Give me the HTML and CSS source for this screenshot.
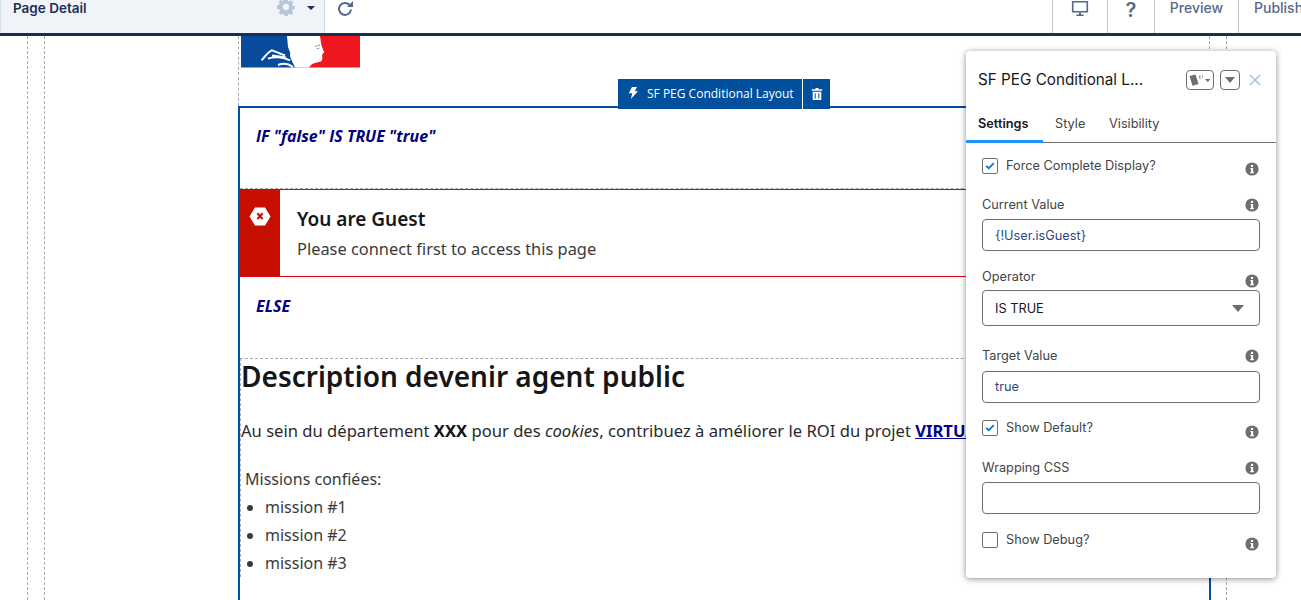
FILE: index.html
```html
<!DOCTYPE html>
<html lang="en">
<head>
    <meta charset="UTF-8">
    <title>Page Detail</title>
    <link rel="stylesheet" href="styles.css">
</head>
<body>
    <svg class="defs" width="0" height="0">
        <symbol id="i-info" viewBox="0 0 14 14">
            <circle cx="7" cy="7" r="6.6" fill="#706e6b"/>
            <circle cx="7" cy="3.9" r="1.2" fill="#fff"/>
            <path d="M5.4 6h2.7v4.1h.8v1.1H5.2v-1.1h.9V7.1h-.7z" fill="#fff"/>
        </symbol>
        <symbol id="i-check" viewBox="0 0 16 16">
            <path d="M3.6 8.4l1.3-1.2 1.9 1.8 4.4-4.4 1.2 1.2-5.6 5.8z" fill="#0176d3"/>
        </symbol>
    </svg>

    <header class="topbar">
        <div class="page-select">
            <span class="page-name">Page Detail</span>
            <svg class="gear" width="20" height="20" viewBox="0 0 20 20">
                <path fill-rule="evenodd" fill="#b4c6d8" d="M8.2 1h3.6l.4 2.4 1.4.6 2-1.4 2.5 2.5-1.4 2 .6 1.4 2.4.4v3.6l-2.4.4-.6 1.4 1.4 2-2.5 2.5-2-1.4-1.4.6-.4 2.4H8.2l-.4-2.4-1.4-.6-2 1.4-2.5-2.5 1.4-2-.6-1.4L0 11.800V8.200l2.3-.4.6-1.400-1.400-2L4 1.900l2 1.400 1.400-.6zM10 6.500a3.500 3.500 0 1 0 0 7 3.500 3.500 0 0 0 0-7z"/>
            </svg>
            <span class="caret"></span>
        </div>
        <svg class="refresh" width="18" height="18" viewBox="0 0 18 18">
            <path d="M12.600 5A6 6 0 1 0 14 9.500" fill="none" stroke="#54698d" stroke-width="2"/>
            <path d="M16 1v6h-6z" fill="#54698d"/>
        </svg>
        <nav class="top-actions">
            <div class="top-btn btn-device">
                <svg width="18" height="18" viewBox="0 0 18 18">
                    <path d="M1.500 1h15a.6.6 0 0 1 .6.600v10.300a.6.6 0 0 1-.6.600h-15a.6.6 0 0 1-.6-.6V1.600a.6.6 0 0 1 .6-.6zm1 1.600v8.300h13V2.600z" fill="#54698d"/>
                    <path d="M8 12.500h2v2h2.500v1.500h-7v-1.500H8z" fill="#54698d"/>
                </svg>
            </div>
            <div class="top-btn btn-help">?</div>
            <div class="top-btn btn-preview">Preview</div>
            <div class="top-btn btn-publish">Publish</div>
        </nav>
    </header>

    <main class="canvas">
        <div class="guide-outer">
            <div class="guide-inner">
                <div class="column">
                    <div class="logo-zone">
                        <svg class="logo" width="119" height="32" viewBox="0 0 119 32">
                            <rect x="0" y="0" width="60" height="31.500" fill="#0a4a9c"/>
                            <rect x="60" y="0" width="59" height="31.500" fill="#ef1620"/>
                            <path d="M46 0H79C80 6 80 10 83.300 16L81 19C81.500 21 81.500 24 80.500 25C77 27 71 26 68 31.500H54C52 27 50 24 49 20C50 17 48 14 47 11z" fill="#fff"/>
                            <path d="M20.700 24.300C24 20 27 16 30.700 14.300C35 16 40 18 44 19.300M27 22.700C33 20 42 21 49 24.300M37 29C42 27 48 28 52 31M31 19.500L45 21.500" fill="none" stroke="#fff" stroke-width="2"/>
                            <path d="M74 10.500l5-1.500M75.500 13l3-1" stroke="#999" stroke-width="1"/>
                        </svg>
                    </div>

                    <section class="cond-box">
                        <div class="cond-label if-label">IF "false" IS TRUE "true"</div>
                        <div class="alert">
                            <div class="alert-side">
                                <svg width="22" height="19" viewBox="0 0 22 19">
                                    <path d="M6 .5h10l5.500 9-5.500 9H6L.5 9.500z" fill="#fff"/>
                                    <path d="M7.600 7l1.400-1.400 2 2 2-2L14.400 7l-2 2.200 2 2.100-1.400 1.400-2-2-2 2-1.400-1.400 2-2.100z" fill="#c70f00"/>
                                </svg>
                            </div>
                            <div class="alert-body">
                                <div class="alert-title">You are Guest</div>
                                <div class="alert-text">Please connect first to access this page</div>
                            </div>
                        </div>
                        <div class="cond-label else-label">ELSE</div>
                        <article class="rich">
                            <h1>Description devenir agent public</h1>
                            <p class="lead">Au sein du département <strong>XXX</strong> pour des <em>cookies</em>, contribuez à améliorer le ROI du projet <a href="#">VIRTUAL</a></p>
                            <p class="missions">Missions confiées:</p>
                            <ul>
                                <li>mission #1</li>
                                <li>mission #2</li>
                                <li>mission #3</li>
                            </ul>
                        </article>
                    </section>

                    <div class="cmp-toolbar">
                        <div class="cmp-name">
                            <svg width="10" height="12" viewBox="0 0 10 12">
                                <path d="M4 0h5L6.800 4.200H10L2.800 12l1.500-5.700H.8z" fill="#fff"/>
                            </svg>
                            <span>SF PEG Conditional Layout</span>
                        </div>
                        <div class="cmp-delete">
                            <svg width="12" height="12" viewBox="0 0 12 12">
                                <path d="M4.500 0h3v1.200h3.700v1.500H.8V1.200h3.700zM1.700 3.700h8.600V12H1.700zM3.700 5.200v5.300h1V5.200zm3.600 0v5.300h1V5.200z" fill="#fff"/>
                            </svg>
                        </div>
                    </div>
                </div>
            </div>
        </div>

        <aside class="panel">
            <div class="panel-head">
                <span class="panel-title">SF PEG Conditional L...</span>
                <span class="mini-btn mini-cards">
                    <svg width="24" height="14" viewBox="0 0 24 14">
                        <path d="M1.500 3L7.500 1.500 10.500 11 4.500 12.800z" fill="#706e6b"/>
                        <path d="M11 2.500l1.500.4-.4 4.500zM14 2.500l1 .2-.8 3z" fill="#706e6b"/>
                        <path d="M17 6h5.500l-2.750 3z" fill="#706e6b"/>
                    </svg>
                </span>
                <span class="mini-btn mini-down"><span class="tri"></span></span>
                <svg class="close" width="14" height="14" viewBox="0 0 14 14">
                    <path d="M2 2l10 10M12 2L2 12" stroke="#b0c4de" stroke-width="1.700"/>
                </svg>
            </div>
            <div class="tabs">
                <span class="tab tab-on">Settings</span>
                <span class="tab tab-style">Style</span>
                <span class="tab tab-vis">Visibility</span>
            </div>
            <div class="form">
                <div class="row-check row-force">
                    <span class="box"><svg width="16" height="16"><use href="#i-check"/></svg></span>
                    <span class="check-text">Force Complete Display?</span>
                    <svg class="info info-low" width="14" height="14"><use href="#i-info"/></svg>
                </div>
                <div class="field-head head-current">
                    <span>Current Value</span>
                    <svg class="info" width="14" height="14"><use href="#i-info"/></svg>
                </div>
                <div class="input val">{!User.isGuest}</div>
                <div class="field-head head-operator">
                    <span>Operator</span>
                    <svg class="info info-lower" width="14" height="14"><use href="#i-info"/></svg>
                </div>
                <div class="input select">IS TRUE<span class="select-tri"></span></div>
                <div class="field-head head-target">
                    <span>Target Value</span>
                    <svg class="info" width="14" height="14"><use href="#i-info"/></svg>
                </div>
                <div class="input val input-target">true</div>
                <div class="row-check row-default">
                    <span class="box"><svg width="16" height="16"><use href="#i-check"/></svg></span>
                    <span class="check-text">Show Default?</span>
                    <svg class="info info-lower" width="14" height="14"><use href="#i-info"/></svg>
                </div>
                <div class="field-head head-wrap">
                    <span>Wrapping CSS</span>
                    <svg class="info" width="14" height="14"><use href="#i-info"/></svg>
                </div>
                <div class="input"></div>
                <div class="row-check row-debug">
                    <span class="box"></span>
                    <span class="check-text">Show Debug?</span>
                    <svg class="info info-lower" width="14" height="14"><use href="#i-info"/></svg>
                </div>
            </div>
        </aside>
    </main>
</body>
</html>
```

FILE: styles.css
```css
html, body {
    margin: 0;
    height: 600px;
    overflow: hidden;
}
body {
    background: #fff;
    font-family: "Inter", "Liberation Sans", sans-serif;
    color: #181818;
    display: flex;
    flex-direction: column;
}
.defs { position: absolute; }

/* top bar */
.topbar {
    flex: none;
    height: 33px;
    display: flex;
    align-items: flex-start;
    border-bottom: 3px solid #1b2f55;
}
.page-select {
    width: 324px;
    height: 33px;
    display: flex;
    align-items: flex-start;
    background: #f0f4f8;
    border-right: 1px solid #c9d5e3;
    box-shadow: inset 1px 0 0 #d8e0ea;
}
.page-name {
    margin: 0 0 0 13px;
    font-size: 13.5px;
    line-height: 16px;
    font-weight: 600;
    color: #1b2f55;
    width: 264px;
}
.gear { margin-top: -2px; width: 18px; height: 18px; }
.caret {
    margin: 6px 0 0 12px;
    border: 4px solid transparent;
    border-top: 4px solid #1b2f55;
}
.refresh { margin: 0 0 0 12px; }
.top-actions {
    margin-left: auto;
    display: flex;
}
.top-btn {
    height: 33px;
    box-sizing: border-box;
    border-left: 1px solid #c4c4c4;
    color: #54698d;
    font-size: 14px;
    line-height: 16px;
    font-weight: 500;
    display: flex;
    justify-content: center;
}
.btn-device { width: 55px; }
.btn-help { width: 47px; font-size: 20px; line-height: 20px; font-weight: 600; }
.btn-preview { width: 84px; }
.btn-publish { width: 63px; justify-content: flex-start; padding-left: 15px; white-space: nowrap; overflow: hidden; }

/* page canvas */
.canvas {
    flex: 1;
    position: relative;
    overflow: hidden;
}
.guide-outer {
    height: 100%;
    margin: 0 74px 0 27px;
    border-left: 1px dashed #a9a9a9;
    border-right: 1px dashed #a9a9a9;
}
.guide-inner {
    height: 100%;
    margin: 0 16px;
    border-left: 1px dashed #a9a9a9;
    border-right: 1px dashed #a9a9a9;
}
.column {
    position: relative;
    height: 100%;
    margin: 0 -2px 0 193px;
}
.logo-zone {
    height: 70px;
    border-left: 1px dashed #a9a9a9;
    padding-left: 2px;
    box-sizing: border-box;
}
.logo { display: block; }

.cond-box {
    height: 600px;
    border: 2px solid #00509e;
    border-bottom: 0;
    box-sizing: border-box;
}
.cond-label {
    font-family: "Open Sans", sans-serif;
    font-size: 16px;
    font-weight: 700;
    font-style: italic;
    color: #000080;
    padding-left: 16px;
    height: 81px;
    padding-top: 18px;
    box-sizing: border-box;
    line-height: 22px;
}
.if-label { height: 80px; padding-top: 17px; }

.alert {
    height: 89px;
    display: flex;
    box-sizing: border-box;
    border-top: 1px dashed #a9a9a9;
    border-bottom: 1px solid #e1000f;
    font-family: "Noto Sans", sans-serif;
}
.alert-side {
    width: 40px;
    background: #c70f00;
    display: flex;
    justify-content: center;
    padding-top: 18px;
    box-sizing: border-box;
}
.alert-body {
    flex: 1;
    padding: 15px 0 0 17px;
    border-top: 1px solid #c70f00;
}
.alert-title { font-size: 19px; line-height: 28px; font-weight: 600; color: #161616; }
.alert-text { font-size: 16.4px; line-height: 24px; margin-top: 4px; color: #3a3a3a; }

.rich {
    border-top: 1px dashed #a9a9a9;
    border-left: 1px dashed #a9a9a9;
    font-family: "Noto Sans", sans-serif;
}
.rich h1 {
    margin: -1px 0 0;
    font-size: 28px;
    line-height: 36px;
    font-weight: 600;
    color: #161616;
}
.lead {
    margin: 23px 0 0;
    font-size: 16.6px;
    line-height: 28px;
    white-space: nowrap;
    color: #2a2a2a;
}
.lead strong { color: #161616; }
.lead a { color: #000091; font-weight: 700; }
.missions {
    margin: 20px 0 0 4px;
    font-size: 16px;
    line-height: 28px;
    color: #3a3a3a;
}
.rich ul {
    margin: 0;
    padding-left: 24px;
    font-size: 16px;
    line-height: 28px;
    color: #3a3a3a;
}

.cmp-toolbar {
    position: absolute;
    left: 380px;
    top: 43px;
    height: 30px;
    display: flex;
    background: #00509e;
    color: #fff;
    font-family: "Open Sans", sans-serif;
    font-size: 12px;
}
.cmp-name {
    width: 185px;
    display: flex;
    align-items: center;
    padding: 0 0 2px 10px;
    gap: 9px;
    box-sizing: border-box;
    border-right: 1px solid #fff;
}
.cmp-delete {
    width: 27px;
    display: flex;
    align-items: center;
    justify-content: center;
}

/* property panel */
.panel {
    position: absolute;
    left: 966px;
    top: 15px;
    width: 310px;
    height: 527px;
    background: #fff;
    border-radius: 4px;
    box-shadow: 0 1px 6px rgba(0, 0, 0, .45);
}
.panel-head {
    height: 57px;
    display: flex;
    align-items: center;
    padding: 0 0 0 12px;
}
.panel-title {
    width: 208px;
    font-size: 15.25px;
    color: #181818;
    white-space: nowrap;
}
.mini-btn {
    height: 20px;
    box-sizing: border-box;
    border: 1px solid #706e6b;
    border-radius: 4px;
    display: flex;
    align-items: center;
    justify-content: center;
}
.mini-cards { width: 28px; }
.mini-down { width: 20px; margin-left: 6px; }
.tri, .select-tri {
    width: 0;
    height: 0;
    border-left: 5px solid transparent;
    border-right: 5px solid transparent;
    border-top: 6px solid #706e6b;
}
.close { margin-left: 8px; }
.tabs {
    height: 35px;
    box-sizing: border-box;
    padding: 7px 0 0 12px;
    display: flex;
    font-size: 12.75px;
    line-height: 18px;
    color: #444;
    border-bottom: 1px solid #757575;
    position: relative;
}
.tab-on { font-weight: 600; color: #181818; width: 77px; }
.tab-style { width: 54px; }
.tabs::after {
    content: "";
    position: absolute;
    left: 0;
    bottom: -1px;
    width: 77px;
    height: 3px;
    background: #1b96ff;
}
.form {
    padding: 0 16px;
    font-size: 12.75px;
    line-height: 16px;
    color: #444;
}
.row-check, .field-head {
    display: flex;
    align-items: flex-start;
}
.check-text { margin-left: 8px; flex: 1; }
.box {
    width: 16px;
    height: 16px;
    box-sizing: border-box;
    border: 1px solid #706e6b;
    border-radius: 2px;
    overflow: hidden;
    display: block;
}
.box svg { display: block; margin: -1px; }
.field-head span { flex: 1; }
.info { flex: none; margin: 1px 1px 0 0; }
.info-low { margin-top: 4px; }
.info-lower { margin-top: 5px; }
.input {
    height: 32px;
    box-sizing: border-box;
    border: 1px solid #706e6b;
    border-radius: 4px;
    padding: 1px 12px 0;
    line-height: 30px;
    color: #181818;
}
.val { color: #2e4a7d; }
.select {
    height: 36px;
    line-height: 34px;
    display: flex;
    align-items: center;
    justify-content: space-between;
}
.select-tri { margin-right: 3px; border-left-width: 6px; border-right-width: 6px; border-top-width: 7px; }

.row-force { margin-top: 15px; }
.head-current { margin-top: 21px; }
.head-current + .input { margin-top: 6px; }
.head-operator { margin-top: 18px; height: 20px; }
.head-operator + .input { margin-top: 1px; }
.head-target { margin-top: 22px; }
.head-target + .input { margin-top: 7px; padding-top: 0; }
.row-default { margin-top: 17px; }
.head-wrap { margin-top: 21px; }
.head-wrap + .input { margin-top: 6px; }
.row-debug { margin-top: 18px; }
```
